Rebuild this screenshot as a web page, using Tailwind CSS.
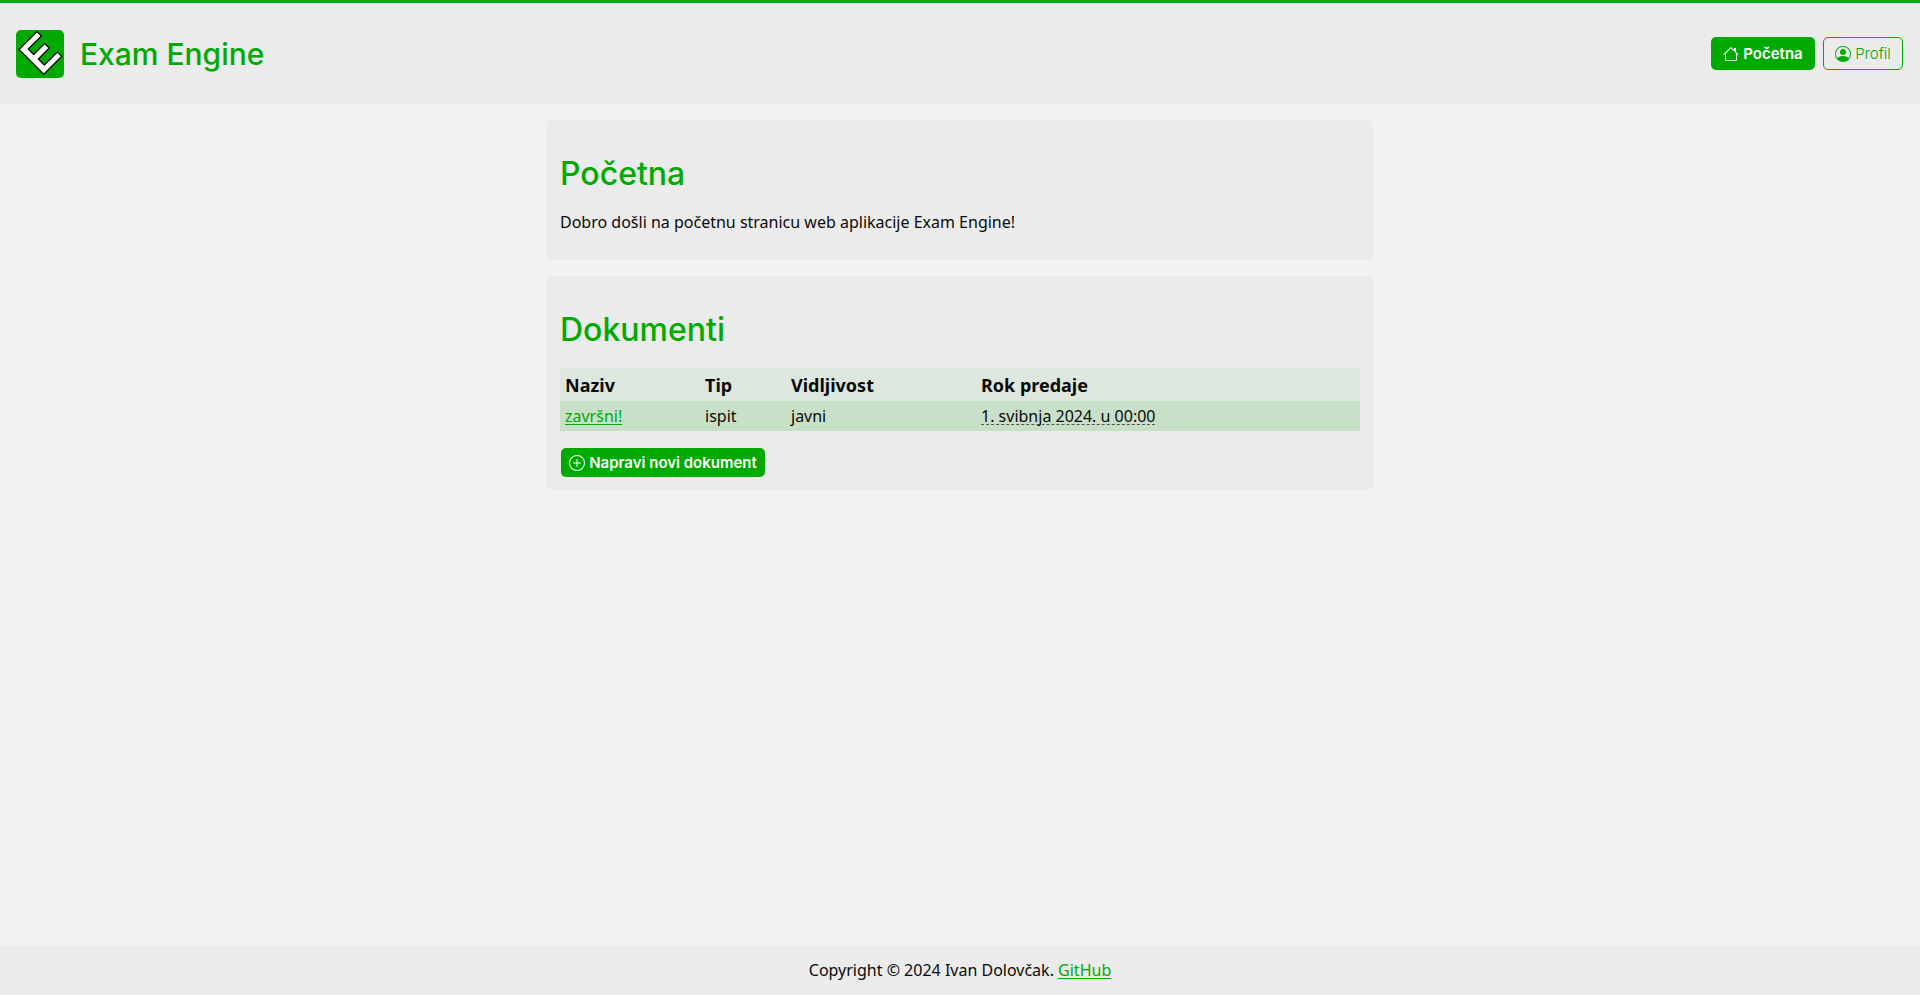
<!DOCTYPE html>
<html lang="hr">
<head>
<meta charset="utf-8">
<meta name="viewport" content="width=device-width, initial-scale=1">
<title>Exam Engine</title>
<script src="https://cdn.jsdelivr.net/npm/@tailwindcss/browser@4"></script>
</head>
<body class="flex min-h-screen flex-col bg-[#f2f2f2] font-['Noto_Sans',sans-serif] text-base leading-6 text-[#0a0a0a]">
<header class="flex items-center justify-between border-t-3 border-[#00aa00] bg-[#ebebeb] px-4 pt-[27px] pb-[26px]">
  <div class="flex items-center gap-4">
    <svg class="size-12 rounded-[5px]" viewBox="0 0 48 48" aria-hidden="true">
      <rect width="48" height="48" fill="#00aa00"/>
      <path transform="matrix(.7071 .7071 .7071 -.7071 3 19.6)" d="M0 0H35V25.5H28.8V7H20.4V22.5H13.8V7H6.2V25.5H0Z" fill="#fff" stroke="#111" stroke-width="1.4"/>
    </svg>
    <span class="font-['Inter',sans-serif] text-3xl font-medium text-[#00aa00]">Exam Engine</span>
  </div>
  <nav class="flex gap-2 pr-px pb-px font-['Inter',sans-serif]">
    <a href="#" class="flex h-[33px] w-[104px] items-center justify-center gap-1 rounded-[5px] bg-[#00aa00] text-[15px] font-semibold text-white">
      <svg class="size-4" viewBox="0 0 16 16" fill="currentColor" aria-hidden="true"><path d="M8.707 1.5a1 1 0 0 0-1.414 0L.646 8.146a.5.5 0 0 0 .708.708L2 8.207V13.5A1.5 1.5 0 0 0 3.5 15h9a1.5 1.5 0 0 0 1.5-1.5V8.207l.646.647a.5.5 0 0 0 .708-.708L13 5.793V2.5a.5.5 0 0 0-.5-.5h-1a.5.5 0 0 0-.5.5v1.293zM13 7.207V13.5a.5.5 0 0 1-.5.5h-9a.5.5 0 0 1-.5-.5V7.207l5-5z"/></svg>
      Početna</a>
    <a href="#" class="flex h-[33px] w-20 items-center justify-center gap-1 rounded-[5px] border border-[#00aa00] text-[15px] font-light text-[#00aa00]">
      <svg class="size-4" viewBox="0 0 16 16" fill="currentColor" aria-hidden="true"><path d="M11 6a3 3 0 1 1-6 0 3 3 0 0 1 6 0"/><path fill-rule="evenodd" d="M0 8a8 8 0 1 1 16 0A8 8 0 0 1 0 8m8-7a7 7 0 0 0-5.468 11.37C3.242 11.226 4.805 10 8 10s4.757 1.225 5.468 2.37A7 7 0 0 0 8 1"/></svg>
      Profil</a>
  </nav>
</header>
<main class="mx-auto flex w-full max-w-[826px] grow flex-col gap-4 py-4">
  <section class="rounded-[5px] bg-[#ebebeb] px-[13px] pt-[34px] pb-[22px]">
    <h1 class="mb-4 font-['Inter',sans-serif] text-[32px] leading-10 font-medium text-[#00aa00]">Početna</h1>
    <p class="pb-1">Dobro došli na početnu stranicu web aplikacije Exam Engine!</p>
  </section>
  <section class="rounded-[5px] bg-[#ebebeb] px-[13px] pt-[34px] pb-[13px]">
    <h1 class="mb-[18px] font-['Inter',sans-serif] text-[32px] leading-10 font-medium text-[#00aa00]">Dokumenti</h1>
    <table class="w-full table-fixed text-left">
      <colgroup><col class="w-[140px]"><col class="w-[86px]"><col class="w-[190px]"><col></colgroup>
      <thead><tr class="h-[33px] bg-[#dee7de] text-lg leading-6"><th class="px-[5px]">Naziv</th><th class="px-[5px]">Tip</th><th class="px-[5px]">Vidljivost</th><th class="px-[5px]">Rok predaje</th></tr></thead>
      <tbody><tr class="h-[30px] bg-[#c8e0c8]"><td class="px-[5px]"><a href="#" class="text-[#00aa00] underline decoration-1 underline-offset-2">završni!</a></td><td class="px-[5px]">ispit</td><td class="px-[5px]">javni</td><td class="px-[5px]"><time datetime="2024-05-01T00:00" class="underline decoration-[#555] decoration-dashed decoration-1 underline-offset-2">1. svibnja 2024. u 00:00</time></td></tr></tbody>
    </table>
    <button type="button" class="mt-[17px] ml-px flex h-[29px] w-[204px] items-center justify-center gap-1 rounded-[5px] bg-[#00aa00] font-['Inter',sans-serif] text-[15px] font-semibold text-white">
      <svg class="size-4" viewBox="0 0 16 16" fill="currentColor" aria-hidden="true"><path d="M8 15A7 7 0 1 1 8 1a7 7 0 0 1 0 14m0 1A8 8 0 1 0 8 0a8 8 0 0 0 0 16"/><path d="M8 4a.5.5 0 0 1 .5.5v3h3a.5.5 0 0 1 0 1h-3v3a.5.5 0 0 1-1 0v-3h-3a.5.5 0 0 1 0-1h3v-3A.5.5 0 0 1 8 4"/></svg>
      Napravi novi dokument</button>
  </section>
</main>
<footer class="bg-[#ebebeb] py-[13px] text-center">Copyright © 2024 Ivan Dolovčak. <a href="#" class="text-[#00aa00] underline decoration-1 underline-offset-2">GitHub</a></footer>
</body>
</html>
